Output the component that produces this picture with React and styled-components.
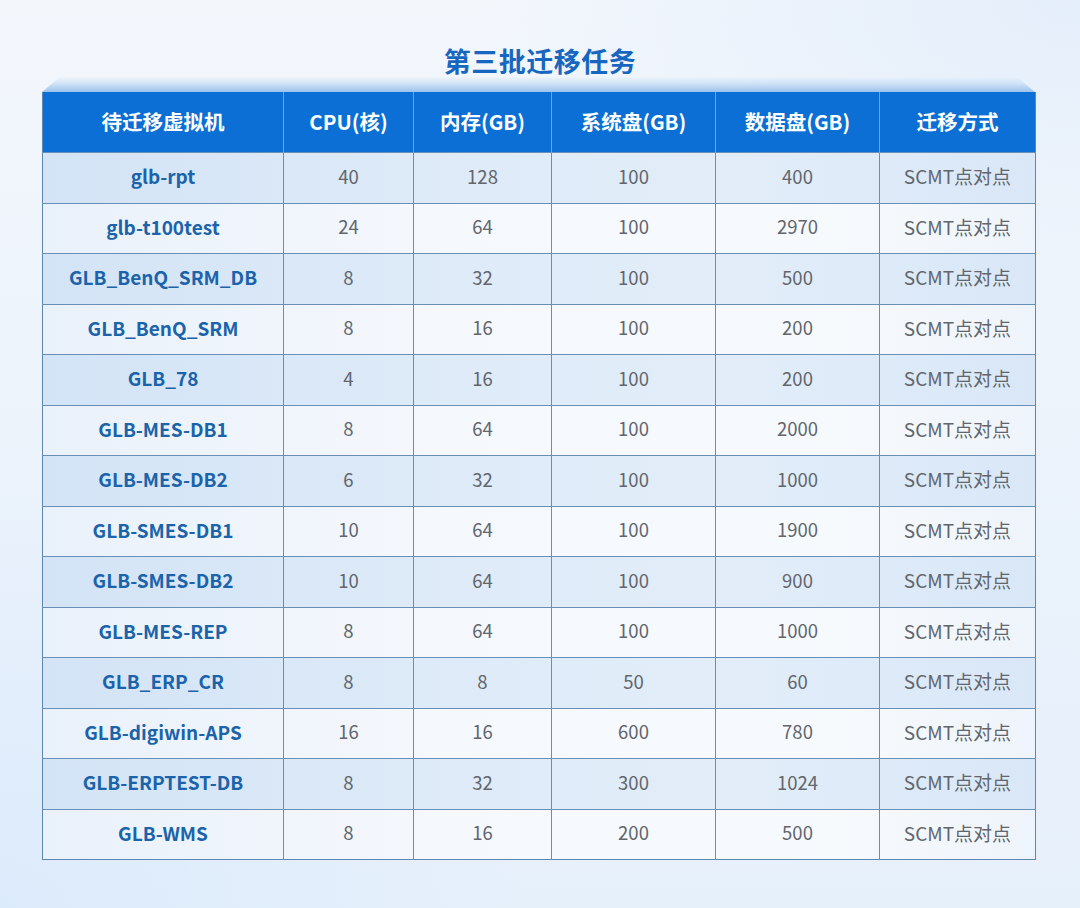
import React from 'react';
import styled, { createGlobalStyle } from 'styled-components';

const GlobalStyle = createGlobalStyle`
  html, body {
    margin: 0;
    padding: 0;
  }
  body {
    font-family: "Noto Sans CJK SC", "Noto Sans", sans-serif;
    background: #eef4fb;
  }
`;

const columns = ['待迁移虚拟机', 'CPU(核)', '内存(GB)', '系统盘(GB)', '数据盘(GB)', '迁移方式'];
const widths = [241, 130, 138, 164, 164, 156];

const rows = [
  ['glb-rpt', 40, 128, 100, 400],
  ['glb-t100test', 24, 64, 100, 2970],
  ['GLB_BenQ_SRM_DB', 8, 32, 100, 500],
  ['GLB_BenQ_SRM', 8, 16, 100, 200],
  ['GLB_78', 4, 16, 100, 200],
  ['GLB-MES-DB1', 8, 64, 100, 2000],
  ['GLB-MES-DB2', 6, 32, 100, 1000],
  ['GLB-SMES-DB1', 10, 64, 100, 1900],
  ['GLB-SMES-DB2', 10, 64, 100, 900],
  ['GLB-MES-REP', 8, 64, 100, 1000],
  ['GLB_ERP_CR', 8, 8, 50, 60],
  ['GLB-digiwin-APS', 16, 16, 600, 780],
  ['GLB-ERPTEST-DB', 8, 32, 300, 1024],
  ['GLB-WMS', 8, 16, 200, 500],
];

const Page = styled.div`
  width: 1080px;
  height: 908px;
  box-sizing: border-box;
  padding-top: 44px;
  background:
    radial-gradient(ellipse 520px 420px at 0% 100%, #dcebfb 0%, rgba(220,235,251,0) 100%),
    radial-gradient(ellipse 600px 300px at 100% 0%, #e4eefa 0%, rgba(228,238,250,0) 100%),
    linear-gradient(180deg, #f3f7fc 0%, #eaf2fb 60%, #e6f0fb 100%);
  display: flex;
  flex-direction: column;
  align-items: center;
`;

const Title = styled.h1`
  margin: 0;
  font-size: 27px;
  line-height: 34px;
  font-weight: 700;
  color: #1767c0;
  letter-spacing: 0.5px;
`;

const Board = styled.div`
  width: 993px;
  margin-left: -3px;
  display: flex;
  flex-direction: column;
`;

const Bevel = styled.div`
  height: 15px;
  margin-top: -1px;
  background: linear-gradient(180deg, rgba(232,241,251,0.3) 0%, #cfe2f6 45%, #9cc3ec 100%);
  clip-path: polygon(18px 0, calc(100% - 18px) 0, 100% 100%, 0 100%);
`;

const Table = styled.table`
  width: 993px;
  border-collapse: collapse;
  table-layout: fixed;
  border-left: 1px solid #5f86b0;
  border-right: 1px solid #5f86b0;
  border-bottom: 1px solid #5f86b0;
`;

const HeadCell = styled.th`
  height: 58px;
  padding: 0 0 2px;
  background: #0b6fd5;
  color: #ffffff;
  font-size: 20.5px;
  font-weight: 700;
  text-align: center;
  border-left: 1px solid #67a6ea;
  &:first-child {
    border-left: none;
  }
`;

const Row = styled.tr`
  background: ${p => p.$shaded
    ? 'linear-gradient(90deg, #d3e4f6 0%, #dfebf8 45%, #e2edf9 70%, #d9e7f7 100%)'
    : 'linear-gradient(90deg, #e9f1fa 0%, #f5f8fd 40%, #f7fafd 80%, #eef4fb 100%)'};
`;

const Cell = styled.td`
  height: 45.5px;
  padding: 0 0 4px;
  text-align: center;
  font-size: 18.5px;
  color: #61666d;
  border-top: 1px solid #6a8fb6;
  border-left: 1px solid #6a8fb6;
  &:first-child {
    border-left: none;
  }
`;

const NameCell = styled(Cell)`
  font-weight: 700;
  font-size: 19px;
  color: #1b63aa;
`;

const MethodCell = styled(Cell)`
  font-size: 19px;
`;

export default function App() {
  return (
    <>
      <GlobalStyle />
      <Page>
        <Title>第三批迁移任务</Title>
        <Board>
          <Bevel />
          <Table>
            <colgroup>
              {widths.map((w, i) => <col key={i} style={{ width: w }} />)}
            </colgroup>
            <thead>
              <tr>
                {columns.map(c => <HeadCell key={c}>{c}</HeadCell>)}
              </tr>
            </thead>
            <tbody>
              {rows.map((r, i) => (
                <Row key={r[0]} $shaded={i % 2 === 0}>
                  <NameCell>{r[0]}</NameCell>
                  <Cell>{r[1]}</Cell>
                  <Cell>{r[2]}</Cell>
                  <Cell>{r[3]}</Cell>
                  <Cell>{r[4]}</Cell>
                  <MethodCell>SCMT点对点</MethodCell>
                </Row>
              ))}
            </tbody>
          </Table>
        </Board>
      </Page>
    </>
  );
}
